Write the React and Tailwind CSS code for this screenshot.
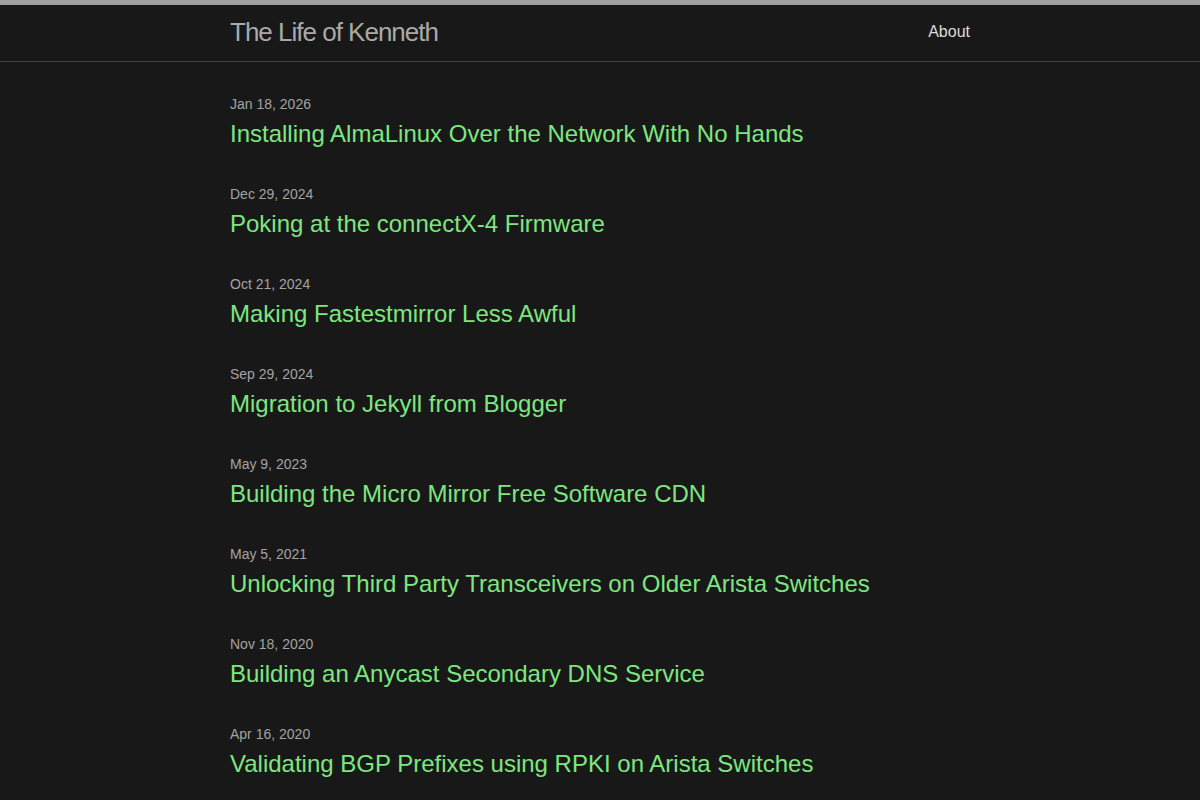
import React from 'react';

const posts = [
  { date: 'Jan 18, 2026', title: 'Installing AlmaLinux Over the Network With No Hands' },
  { date: 'Dec 29, 2024', title: 'Poking at the connectX-4 Firmware' },
  { date: 'Oct 21, 2024', title: 'Making Fastestmirror Less Awful' },
  { date: 'Sep 29, 2024', title: 'Migration to Jekyll from Blogger' },
  { date: 'May 9, 2023', title: 'Building the Micro Mirror Free Software CDN' },
  { date: 'May 5, 2021', title: 'Unlocking Third Party Transceivers on Older Arista Switches' },
  { date: 'Nov 18, 2020', title: 'Building an Anycast Secondary DNS Service' },
  { date: 'Apr 16, 2020', title: 'Validating BGP Prefixes using RPKI on Arista Switches' },
];

export default function App() {
  return (
    <div className="min-h-screen bg-[#181818] font-['Liberation_Sans',Arial,sans-serif]">
      <header className="border-t-[5px] border-t-[#a0a0a0] border-b border-b-[#424242] bg-[#181818]">
        <div className="mx-auto flex h-[56px] w-[740px] items-center justify-between pb-[2px]">
          <a href="#" className="text-[26px] leading-[54px] tracking-[-1px] text-[#a9a9a9]">
            The Life of Kenneth
          </a>
          <nav>
            <a href="#" className="text-base leading-[54px] text-[#dcdcdc]">About</a>
          </nav>
        </div>
      </header>

      <main className="mx-auto w-[740px] pt-[32px]">
        <ul>
          {posts.map(p => (
            <li key={p.title} className="mb-[32px]">
              <div className="text-sm leading-[21px] text-[#a3a3a3]">{p.date}</div>
              <a href="#" className="block text-2xl leading-[37px] text-[#7ee680]">{p.title}</a>
            </li>
          ))}
        </ul>
      </main>
    </div>
  );
}
